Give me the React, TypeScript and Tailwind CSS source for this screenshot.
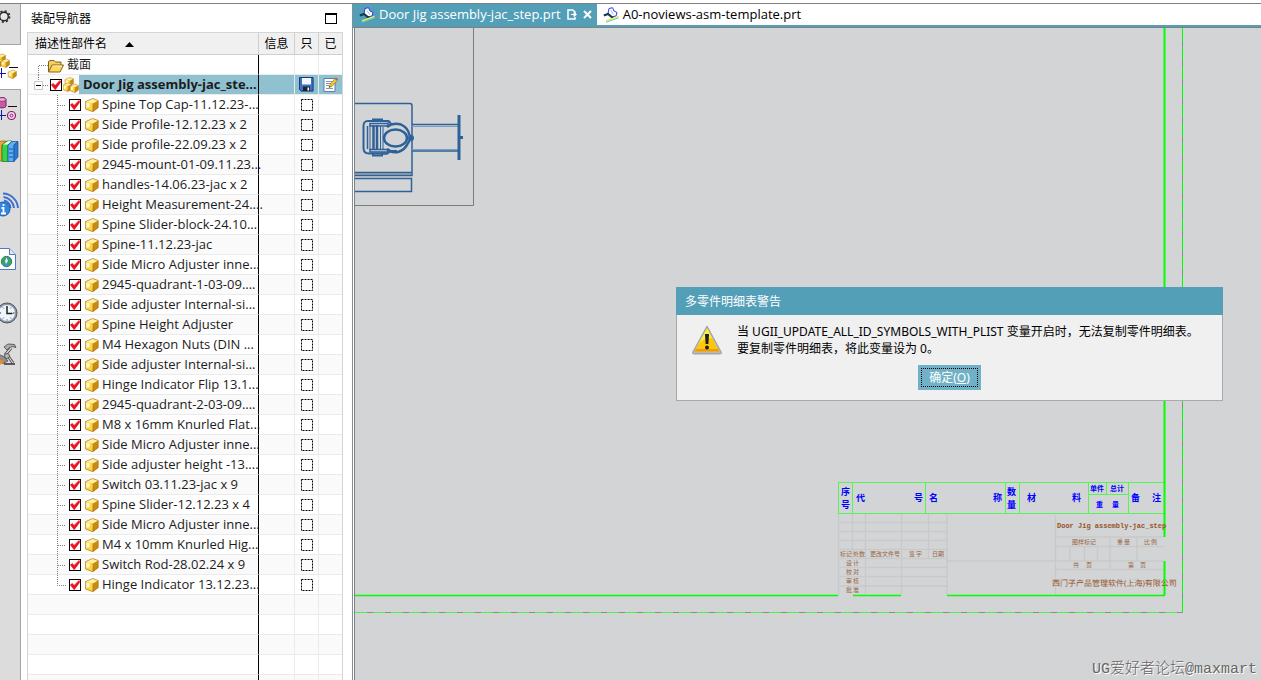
import { Fragment, type ReactNode } from "react";

const parts = [
  "Spine Top Cap-11.12.23-...",
  "Side Profile-12.12.23 x 2",
  "Side profile-22.09.23 x 2",
  "2945-mount-01-09.11.23...",
  "handles-14.06.23-jac x 2",
  "Height Measurement-24....",
  "Spine Slider-block-24.10...",
  "Spine-11.12.23-jac",
  "Side Micro Adjuster inne...",
  "2945-quadrant-1-03-09....",
  "Side adjuster Internal-si...",
  "Spine Height Adjuster",
  "M4 Hexagon Nuts (DIN ...",
  "Side adjuster Internal-si...",
  "Hinge Indicator Flip 13.1...",
  "2945-quadrant-2-03-09....",
  "M8 x 16mm Knurled Flat...",
  "Side Micro Adjuster inne...",
  "Side adjuster height -13....",
  "Switch 03.11.23-jac x 9",
  "Spine Slider-12.12.23 x 4",
  "Side Micro Adjuster inne...",
  "M4 x 10mm Knurled Hig...",
  "Switch Rod-28.02.24 x 9",
  "Hinge Indicator 13.12.23...",
];

const emptyRows = [0, 1, 2, 3, 4];

interface CubeProps {
  x: number;
  y: number;
  s: number;
}

function Cube({ x, y, s }: CubeProps) {
  return (
    <g transform={`translate(${x} ${y}) scale(${s})`}>
      <path d="M0 3.2 7.500 0 13 2 8 4.800Z" fill="#fff0a0" />
      <path d="M0 3.200 8 4.800 7.600 13.200 .3 10.500Z" fill="#ffd23c" />
      <path d="M8 4.800 13 2V9.300L7.600 13.200Z" fill="#c98a10" />
      <path d="M1 4.300 5 5.100 4.500 8.500 1.200 9.500Z" fill="#fff7c8" />
      <path
        d="M0 3.200 7.500 0 13 2V9.300L7.600 13.200 .3 10.500ZM8 4.800 7.600 13.200"
        fill="none"
        stroke="#a87414"
        strokeWidth=".7"
      />
    </g>
  );
}

function AssemblyIcon() {
  return (
    <svg className="h-4 w-4 shrink-0" viewBox="0 0 16 16">
      <Cube x={2} y={0.5} s={0.65} />
      <Cube x={0} y={6} s={0.65} />
      <Cube x={7} y={7} s={0.65} />
    </svg>
  );
}

function FolderIcon() {
  return (
    <svg className="h-4 w-4 shrink-0" viewBox="0 0 16 16">
      <path d="M.5 15V4.500L2 3.500h4L7.500 5H13v3" fill="#f5cf63" stroke="#80621b" />
      <path d="M.5 15 4 8h11.500L12 15Z" fill="#ffd55c" stroke="#80621b" />
      <path d="M4.600 9h9.300" stroke="#fff3b5" />
    </svg>
  );
}

function SaveIcon() {
  return (
    <svg className="h-[15px] w-[15px]" viewBox="0 0 15 15">
      <path d="M.5.5h13.6v13.6H2L.5 12.6Z" fill="#3f6fbd" stroke="#173a80" />
      <path d="M3 1h9v6.5H3Z" fill="#f4f7fc" />
      <path d="M3 7.5h9" stroke="#8eb3e8" />
      <path d="M4 9.5h7V14H4Z" fill="#1c2430" />
      <path d="M8.500 10.500h1.600v3H8.500Z" fill="#fff" />
    </svg>
  );
}

function ModifyIcon() {
  return (
    <svg className="h-[15px] w-[15px]" viewBox="0 0 15 15">
      <path d="M1 1.5h11v13H1Z" fill="#fff" stroke="#5f7fb0" />
      <path d="M3 4.5h6M3 6.5h5M3 8.5h3M3 11.5h7" stroke="#8296b8" />
      <path d="M6 10.5 7 7.5 12 1.5 14.3 3.4 9 9.4Z" fill="#f7c331" stroke="#8d6a18" strokeWidth=".6" />
      <path d="M12 1.5 13 .4 15 2.3 14.3 3.4Z" fill="#d8443c" />
      <path d="M6 10.5 6.5 9 7.5 9.8Z" fill="#222" />
    </svg>
  );
}

function PartFileIcon() {
  return (
    <svg className="h-4 w-4 shrink-0" viewBox="0 0 16 16">
      <path d="M5 6.500 6 1.500 9.500 .7 11 4 14 5.500 13 9 8 10Z" fill="#fff" stroke="#2b3be0" />
      <path d="M8 3.500 10.500 7.500" stroke="#a8b4f5" />
      <path d="M.8 8.500 5 7 10 11" fill="none" stroke="#123a55" strokeWidth="2.200" />
      <path d="M3 14 15.500 9.500" stroke="#f2e544" strokeWidth="1.800" />
      <path d="M3 15.300 15.500 10.900" stroke="#54cfe8" />
    </svg>
  );
}

function TickBox({ label }: { label: string }) {
  return (
    <span className="relative h-3 w-3 shrink-0">
      <input
        type="checkbox"
        defaultChecked
        aria-label={label}
        className="block h-3 w-3 appearance-none border border-black bg-white"
      />
      <svg className="pointer-events-none absolute inset-0 h-3 w-3" viewBox="0 0 12 12">
        <path d="M1.300 5.800 3.400 4.400 5 6.400 10 1.400 10.800 3.200 5.200 10.800Z" fill="#ee1020" stroke="#ee1020" strokeWidth=".6" />
      </svg>
    </span>
  );
}

function OnlyBox({ label }: { label: string }) {
  return (
    <span className="relative h-3 w-3 shrink-0">
      <input type="checkbox" aria-label={label} className="block h-3 w-3 appearance-none" />
      <svg className="pointer-events-none absolute inset-0 h-3 w-3" viewBox="0 0 12 12">
        <path d="M.5.5H11.500V11.500H.5Z" fill="none" stroke="#000" strokeDasharray="2 1" />
      </svg>
    </span>
  );
}

const cellBorder = "h-5 border-b border-[#ebebeb] p-0";

interface TreeRowProps {
  shaded?: boolean;
  selected?: boolean;
  name?: ReactNode;
  only?: ReactNode;
  modified?: ReactNode;
}

function TreeRow({ shaded, selected, name, only, modified }: TreeRowProps) {
  const fill = selected ? "bg-[#8fc1d0]" : "";
  return (
    <tr className={shaded ? "bg-[#fafafa]" : "bg-white"}>
      <td className={`${cellBorder} border-r border-r-black`}>
        <div className="flex h-[19px] items-center overflow-visible whitespace-nowrap">{name}</div>
      </td>
      <td className={`${cellBorder} border-r ${fill}`} />
      <td className={`${cellBorder} border-r ${fill}`}>
        <div className="flex h-[19px] items-center justify-center">{only}</div>
      </td>
      <td className={`${cellBorder} ${fill}`}>
        <div className="flex h-[19px] items-center justify-center">{modified}</div>
      </td>
    </tr>
  );
}

function Navigator() {
  return (
    <section className="flex w-[331px] shrink-0 flex-col bg-white pr-[9px] pl-[6px]">
      <header className="flex h-7 shrink-0 items-center justify-between pt-px pr-[6px] pl-1">
        <h2 className="text-xs text-black">装配导航器</h2>
        <button type="button" aria-label="最大化" className="h-[11px] w-3 border border-t-2 border-black" />
      </header>
      <div className="min-h-0 flex-1 overflow-hidden border border-b-0 border-[#d5d5d5]">
        <table className="w-full table-fixed border-separate border-spacing-0">
          <colgroup>
            <col className="w-[231px]" />
            <col className="w-9" />
            <col className="w-6" />
            <col />
          </colgroup>
          <thead>
            <tr className="h-[22px] bg-[#f0f0f0] text-left text-xs text-black">
              <th className="border-r border-b border-[#cfcfcf] p-0 pt-px pl-[7px] font-normal">
                <span className="flex items-center gap-[18px]">
                  描述性部件名
                  <svg className="h-[5px] w-[9px]" viewBox="0 0 9 5">
                    <path d="M4.5 0 9 5H0Z" fill="#000" />
                  </svg>
                </span>
              </th>
              <th className="border-r border-b border-[#cfcfcf] p-0 pt-px text-center font-normal">信息</th>
              <th className="border-r border-b border-[#cfcfcf] p-0 pt-px text-center font-normal">只</th>
              <th className="border-b border-[#cfcfcf] p-0 pt-px text-center font-normal">已</th>
            </tr>
          </thead>
          <tbody className="font-['Open_Sans','Noto_Sans_CJK_SC',sans-serif] text-[13px] leading-[17px] text-[#1c1c1c]">
            <TreeRow
              name={
                <>
                  <svg className="-mb-px h-5 w-5 shrink-0" viewBox="0 0 20 20">
                    <path d="M10.5 20V10.5H20" fill="none" stroke="#808080" strokeDasharray="1 1" />
                  </svg>
                  <FolderIcon />
                  <span className="pl-[3px] text-xs">截面</span>
                </>
              }
            />
            <TreeRow
              shaded
              selected
              name={
                <>
                  <svg className="-mb-px h-5 w-[22px] shrink-0" viewBox="0 0 22 20">
                    <path d="M10.5 0V6M15 10.5h6" fill="none" stroke="#808080" strokeDasharray="1 1" />
                    <path d="M6.5 6.5h8v8h-8Z" fill="#fff" stroke="#c9c9c9" />
                    <path d="M8 10.5h5" stroke="#000" />
                  </svg>
                  <TickBox label="Door Jig assembly-jac_step" />
                  <span className="w-px shrink-0" />
                  <AssemblyIcon />
                  <span className="flex h-full min-w-0 flex-1 items-center bg-[#8fc1d0] pl-1 font-bold">
                    Door Jig assembly-jac_ste...
                  </span>
                </>
              }
              only={<SaveIcon />}
              modified={<ModifyIcon />}
            />
            {parts.map((part, i) => (
              <TreeRow
                key={i}
                shaded={i % 2 === 1}
                name={
                  <>
                    <svg className="-mb-px h-5 w-[41px] shrink-0" viewBox="0 0 41 20">
                      <path
                        d={i === parts.length - 1 ? "M29.5 0V10.5H38" : "M29.5 0V20M30 10.5H38"}
                        fill="none"
                        stroke="#808080"
                        strokeDasharray="1 1"
                      />
                    </svg>
                    <TickBox label={part} />
                    <svg className="mr-[3px] ml-1 h-[14px] w-[14px] shrink-0" viewBox="0 0 14 14">
                      <Cube x={0.2} y={0.5} s={1} />
                    </svg>
                    <span>{part}</span>
                  </>
                }
                only={<OnlyBox label={`只 ${part}`} />}
              />
            ))}
            {emptyRows.map((row) => (
              <TreeRow key={row} shaded={row % 2 === 0} />
            ))}
          </tbody>
        </table>
      </div>
    </section>
  );
}

function ResourceBar() {
  const idle = "block w-full shrink-0 border-r border-[#a5a5a5]";
  return (
    <nav className="flex w-[21px] shrink-0 flex-col bg-[#dcdcdc]">
      <button type="button" aria-label="设置" className={`${idle} h-[41px] border-b`}>
        <svg className="h-10 w-5" viewBox="0 0 20 40">
          <circle cx="4" cy="12.5" r="4.3" fill="#e8e8e8" stroke="#222" strokeWidth="1.4" />
          <circle cx="4" cy="12.5" r="5.600" fill="none" stroke="#222" strokeWidth="1.600" strokeDasharray="2 2.400" />
        </svg>
      </button>
      <button type="button" aria-label="装配导航器" className="block h-11 w-full shrink-0 bg-white">
        <svg className="h-11 w-5" viewBox="0 0 20 44">
          <Cube x={-3} y={9} s={0.65} />
          <Cube x={-6} y={14} s={0.65} />
          <Cube x={1} y={14} s={0.65} />
          <Cube x={8} y={25} s={0.65} />
          <path d="M9 22.5h9" stroke="#111" />
          <path d="M1.500 23v10M0 28.500h6" stroke="#1414b4" />
        </svg>
      </button>
      <button type="button" aria-label="约束导航器" className={`${idle} h-10 border-t`}>
        <svg className="h-10 w-5" viewBox="0 0 20 40">
          <path d="M-2 9.500C-2 7 6 7 6 9.500V16C6 18.500-2 18.500-2 16Z" fill="#c65ba4" stroke="#7b1d61" />
          <ellipse cx="2" cy="9.500" rx="4" ry="1.800" fill="#eab5d8" stroke="#7b1d61" strokeWidth=".7" />
          <path d="M8 16.500h9" stroke="#111" />
          <path d="M1.500 20v10M0 25.500h6" stroke="#1414b4" />
          <circle cx="11.500" cy="25.500" r="4" fill="#f4dcee" stroke="#8a1d6b" strokeWidth="1.200" />
          <circle cx="11.500" cy="25.500" r="1.500" fill="none" stroke="#8a1d6b" />
        </svg>
      </button>
      <button type="button" aria-label="重用库" className={`${idle} h-11`}>
        <svg className="h-11 w-5" viewBox="0 0 20 44">
          <path d="M-4 16 1 12 6 12 2 16V32H-4Z" fill="#f3a23a" stroke="#a55c0c" strokeWidth=".7" />
          <path d="M2 16 7 12h5L8 16V32.500H2Z" fill="#36d548" stroke="#107a1c" strokeWidth=".7" />
          <path d="M3 15.500 8 12.300h3.500L7.500 15.500Z" fill="#fff" />
          <path d="M8 16 12 12.500h6L14 16V32.500H8Z" fill="#5cb0f2" stroke="#124c96" strokeWidth=".7" />
          <path d="M14 16 18 12.500V28L14 32.500Z" fill="#2f78d0" stroke="#124c96" strokeWidth=".7" />
          <path d="M9 20h4M9 24h4M9 28h4" stroke="#1a55a8" />
        </svg>
      </button>
      <button type="button" aria-label="HD3D 工具" className={`${idle} h-[60px]`}>
        <svg className="h-[60px] w-5" viewBox="0 0 20 60">
          <path d="M4 27.500A8 8 0 0 1 10.500 35M3.500 24A12 12 0 0 1 14 35M3 20.500A15.500 15.500 0 0 1 18 35" fill="none" stroke="#3a6fd0" strokeWidth="1.900" />
          <circle cx="3" cy="36" r="7" fill="#2f86e0" stroke="#1c5cad" />
          <path d="M3.500 31v2M1.500 35h2v5M1 40.500h5" fill="none" stroke="#fff" strokeWidth="1.800" />
        </svg>
      </button>
      <button type="button" aria-label="Web 浏览器" className={`${idle} h-[52px]`}>
        <svg className="h-[52px] w-5" viewBox="0 0 20 52">
          <path d="M-2 15.500H9.500L15.500 21.500V36.500H-2Z" fill="#fff" stroke="#4f7bc4" />
          <path d="M9.500 15.500V21.500H15.500" fill="#dce9fa" stroke="#4f7bc4" />
          <circle cx="6.500" cy="28.500" r="5.200" fill="#3d8fd0" stroke="#3a7d57" />
          <path d="M2.500 25 5 23.500 6 26 4.500 32 2 29.500ZM8 24.500 11 27 10.500 31 7.500 33 8 29Z" fill="#3ba54b" />
          <path d="M6.500 24.500 8 28 6 31 5 28Z" fill="#dff0fb" />
        </svg>
      </button>
      <button type="button" aria-label="历史记录" className={`${idle} h-[54px]`}>
        <svg className="h-[54px] w-5" viewBox="0 0 20 54">
          <circle cx="7" cy="28" r="10" fill="#8a95a5" stroke="#4d5766" />
          <circle cx="7" cy="28" r="8" fill="#eef5fc" />
          <path d="M7 21v7.500h5.500" fill="none" stroke="#222" strokeWidth="1.500" />
          <path d="M7 34.500v1M13 28h1.500M0 28h1M11 22.500l-.6.8M11 33.500l-.6-.8M3 22.500l.6.8M3 33.500l.6-.8" stroke="#333" />
        </svg>
      </button>
      <button type="button" aria-label="加工向导" className={`${idle} h-10`}>
        <svg className="h-10 w-5" viewBox="0 0 20 40">
          <path d="M4 8 8 5 14.500 5.500 16 8.500 12 7.500 9 9 7 11Z" fill="#a9b2a9" stroke="#444" strokeWidth=".8" />
          <path d="M11 9 5 16M8 17 13 24" fill="none" stroke="#4b4b4b" strokeWidth="3" />
          <path d="M11 9 5 16M8 17 13 24" fill="none" stroke="#dadada" strokeWidth="1.200" />
          <circle cx="7" cy="17" r="2.500" fill="#b5b5b5" stroke="#444" strokeWidth=".8" />
          <path d="M-1 15.500 4 17.500 8 22 3 24.500-1 22Z" fill="#8d8d8d" stroke="#444" strokeWidth=".7" />
          <path d="M-1 21 4 21.500 1 25.500H-1Z" fill="#f08a1a" />
          <path d="M4 25H15" stroke="#3b3b3b" strokeWidth="1.600" />
        </svg>
      </button>
      <div className="flex-1 border-r border-[#a5a5a5]" />
    </nav>
  );
}

const headerTexts: [number, number, string][] = [
  [841, 495, "序"],
  [841, 508, "号"],
  [856, 501, "代"],
  [914, 501, "号"],
  [929, 501, "名"],
  [993, 501, "称"],
  [1007, 495, "数"],
  [1007, 508, "量"],
  [1027, 501, "材"],
  [1072, 501, "料"],
  [1131, 501, "备"],
  [1152, 501, "注"],
];

const subHeaderTexts: [number, number, string][] = [
  [1090, 491, "单件"],
  [1110, 491, "总计"],
  [1096, 507, "重"],
  [1112, 507, "量"],
];

const blockTexts: [number, number, string][] = [
  [840, 556, "标记"],
  [853, 556, "处数"],
  [870, 556, "更改文件号"],
  [909, 556, "签"],
  [916, 556, "字"],
  [932, 556, "日期"],
  [846, 565, "设"],
  [853, 565, "计"],
  [846, 574, "校"],
  [853, 574, "对"],
  [846, 583, "审"],
  [853, 583, "核"],
  [846, 592, "批"],
  [853, 592, "准"],
  [1072, 544, "图样标记"],
  [1117, 544, "重"],
  [1124, 544, "量"],
  [1144, 544, "比"],
  [1151, 544, "例"],
  [1073, 567, "共"],
  [1086, 567, "页"],
  [1128, 567, "第"],
  [1140, 567, "页"],
];

function SheetDrawing() {
  return (
    <svg className="absolute inset-0 h-full w-full">
      <g transform="translate(-355 -28)" fill="none">
        <path d="M473.500 28V205.500H355" stroke="#7c7c7c" />

        <g stroke="#2f6199">
          <path d="M355 103.500H410Q412 103.500 412 106V175.500H355M355 172.500H412M355 178.500H411.500V191.500H355" strokeWidth="1.500" />
          <path d="M355 174H411" stroke="#6d7780" />
          <path d="M412 124.500H458M412 151H458" strokeWidth="1.500" />
          <path d="M412 126.500H458M412 149.500H458" stroke="#7f9cbc" />
          <path d="M459 115V160" strokeWidth="3" />
          <path d="M460 137.500H463" strokeWidth="3" />
          <path d="M373 121V119.500H382V121H388Q390 122 391 124H397M368 121H388M391 151H397M388 153.500H382V155.500H373V153.500" strokeWidth="2" />
          <path d="M390 122Q388 121 386 121H368Q363 121 363.500 127V148Q363.500 153.500 369 153.500H386Q389 153.500 390 151" strokeWidth="2" />
          <path d="M370 123.500H388V126H370ZM370 149.500H388V152H370ZM367.500 126V149" strokeWidth="1.500" />
          <path d="M373.500 125V150M377 125V150" strokeWidth="2.500" />
          <path d="M380.500 126V150M383 127V150M370 125V150" />
          <ellipse cx="395.500" cy="138" rx="11.500" ry="8.500" strokeWidth="2.500" />
          <path d="M387 127Q393 122 401 124.500Q408 128 409 134L411 138L408 143Q405 150 398 152Q391 153 387 149" strokeWidth="2.500" />
          <circle cx="411" cy="138" r="2" strokeWidth="2" />
        </g>

        <g stroke="#c9c9c9" strokeWidth="1.500">
          <path d="M838.500 514V595M852.500 514V558M865.500 514V595M901.500 514V595M928.500 514V558M947 514V595" />
          <path d="M838 522.500H947M838 531.500H947M838 540.500H947M838 549.500H947M838 558.500H947M838 567.500H947M838 576.500H947M838 586H947" />
          <path d="M947 561H1164M1055.500 515V595M1055 537H1164M1055 546.500H1164M1055 569.500H1164" />
          <path d="M1110 537V569M1137 537V561M1070 547V561M1084.500 547V561M1097.500 547V561" />
        </g>

        <path
          d="M838.500 482.500H1164M838.500 513.500H1164M838.500 482V514M852.500 482V514M925.500 482V514M1005.500 482V514M1019.500 482V514M1088.500 482V514M1106.500 482V494M1128.500 482V514M1088 494.500H1128"
          stroke="#55f555"
        />
        <path d="M1164.500 28V537M1164.500 561V595" stroke="#00ff00" strokeWidth="2" />
        <path d="M355 595.500H838M853 595.500H901M947 595.500H1165" stroke="#00ff00" strokeWidth="1.500" />
        <path d="M355 612.500H1182.500V28" stroke="#8a8a8a" />
        <path d="M355 612.500H1182.500" stroke="#4df04d" strokeDasharray="12 6" />
        <path d="M1182.500 28V612" stroke="#00ff00" strokeDasharray="14 5" />

        <g fill="#0000ff" fontSize="9" fontWeight="700">
          {headerTexts.map(([x, y, text]) => (
            <text key={`${x}-${y}`} x={x} y={y}>
              {text}
            </text>
          ))}
        </g>
        <g fill="#0000ff" fontSize="7" fontWeight="700">
          {subHeaderTexts.map(([x, y, text]) => (
            <text key={`${x}-${y}`} x={x} y={y}>
              {text}
            </text>
          ))}
        </g>
        <g fill="#96653f" fontSize="6">
          {blockTexts.map(([x, y, text]) => (
            <text key={`${x}-${y}`} x={x} y={y}>
              {text}
            </text>
          ))}
        </g>
        <text x="1057" y="528" fill="#96552a" fontSize="7" className="font-['Liberation_Mono',monospace] font-bold">
          Door Jig assembly-jac_step
        </text>
        <text x="1052" y="586" fill="#96552a" fontSize="8" textRendering="geometricPrecision">
          西门子产品管理软件(上海)有限公司
        </text>
      </g>
    </svg>
  );
}

function WarningDialog() {
  const message = [
    "当 UGII_UPDATE_ALL_ID_SYMBOLS_WITH_PLIST 变量开启时，无法复制零件明细表。",
    "要复制零件明细表，将此变量设为 0。",
  ];
  return (
    <div
      role="alertdialog"
      aria-labelledby="warning-title"
      className="absolute top-[259px] left-[321px] w-[547px] bg-[#f0f0f0]"
    >
      <h3 id="warning-title" className="flex h-7 items-center bg-[#549fb8] px-[9px] pt-px text-xs text-white">
        多零件明细表警告
      </h3>
      <div className="border border-t-0 border-[#a9a9a9] pb-[10px]">
        <div className="flex gap-[15px] pt-2 pl-[15px]">
          <svg className="mt-[2px] h-[30px] w-[30px] shrink-0" viewBox="0 0 30 30">
            <path d="M15 1 29.500 27.500Q29.500 29 28 29H2Q.5 29 .5 27.500Z" fill="#b9b9b9" stroke="#8f8f8f" strokeWidth=".8" />
            <path d="M15 3.500 27.500 26.500H2.500Z" fill="#fbc80d" />
            <path d="M15 3.500 20 13Q10 13 6 20Z" fill="#fbf03c" />
            <path d="M4 24H26L27.500 26.500H2.500Z" fill="#f09b0c" />
            <path d="M13 9h4l-.6 10h-2.800Z" fill="#1d1d1d" />
            <circle cx="15" cy="22.500" r="2" fill="#1d1d1d" />
          </svg>
          <div className="text-xs leading-[17px] whitespace-nowrap text-black">
            {message.map((line) => (
              <Fragment key={line}>
                {line}
                <br />
              </Fragment>
            ))}
          </div>
        </div>
        <div className="flex justify-center pt-2">
          <button type="button" className="h-[25px] bg-[#70b1c8] p-[3px] text-xs text-white">
            <span className="flex h-full items-center border border-dotted border-black px-[7px]">
              确定(<u>O</u>)
            </span>
          </button>
        </div>
      </div>
    </div>
  );
}

export default function App() {
  return (
    <div className="flex h-screen flex-col overflow-hidden bg-white pt-[3px] font-['Noto_Sans','Noto_Sans_CJK_SC',sans-serif]">
      <div className="flex min-h-0 flex-1 border-t border-[#808080]">
        <ResourceBar />
        <Navigator />
        <main className="flex min-w-0 flex-1 flex-col border-l border-[#7d8f99]">
          <div className="flex h-[21px] shrink-0 font-['Open_Sans',sans-serif] text-[13px] leading-[21px]">
            <div className="flex items-center bg-[#549fb8] pr-[5px] pl-[6px] text-white">
              <PartFileIcon />
              <span className="pl-1 whitespace-nowrap">Door Jig assembly-jac_step.prt</span>
              <svg className="ml-[6px] h-[11px] w-[11px]" viewBox="0 0 11 11">
                <path d="M6 1H1V10H8V8M6 1 8 3V4" fill="none" stroke="#fff" strokeWidth="1.500" />
                <path d="M4 5.500H8M7 3.500 9.500 5.500 7 7.500Z" fill="#fff" stroke="#fff" />
              </svg>
              <button type="button" aria-label="关闭" className="ml-[5px]">
                <svg className="h-[9px] w-[9px]" viewBox="0 0 9 9">
                  <path d="M1 1 8 8M8 1 1 8" stroke="#fff" strokeWidth="2" />
                </svg>
              </button>
            </div>
            <div className="flex items-center pl-[6px] text-black">
              <PartFileIcon />
              <span className="pl-1 whitespace-nowrap">A0-noviews-asm-template.prt</span>
            </div>
          </div>
          <div className="h-[3px] shrink-0 border-b border-[#808080] bg-[#549fb8]" />
          <div className="ml-px min-h-0 flex-1 border-l border-[#808080]">
            <div className="relative h-full overflow-hidden bg-[#d3d4d6]">
              <SheetDrawing />
              <WarningDialog />
              <p className="absolute right-1 bottom-0 font-['Liberation_Mono','Noto_Sans_CJK_SC',monospace] text-[15px] leading-5 font-light whitespace-nowrap text-[#666] [text-shadow:1px_1px_0_#fff]">
                UG爱好者论坛@maxmart
              </p>
            </div>
          </div>
        </main>
      </div>
    </div>
  );
}
